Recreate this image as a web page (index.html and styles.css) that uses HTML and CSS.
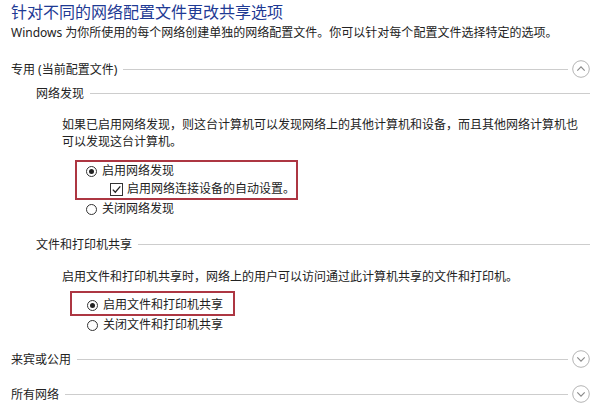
FILE: index.html
```html
<!DOCTYPE html>
<html lang="zh-CN">
<head>
    <meta charset="utf-8">
    <meta name="viewport" content="width=device-width, initial-scale=1.0">
    <title>高级共享设置</title>
    <link rel="stylesheet" href="styles.css">
</head>
<body>
    <div class="page">
        <h1 class="title">针对不同的网络配置文件更改共享选项</h1>
        <p class="desc">Windows 为你所使用的每个网络创建单独的网络配置文件。你可以针对每个配置文件选择特定的选项。</p>

        <div class="group-head first">
            <span>专用 (当前配置文件)</span>
            <span class="rule"></span>
            <svg class="toggle" width="18" height="18" viewBox="0 0 18 18">
                <circle cx="9" cy="9" r="8.3" fill="none" stroke="#b4b4b4" stroke-width="1"/>
                <path d="M5.3 10.6 L9 6.9 L12.7 10.6" fill="none" stroke="#8a8a8a" stroke-width="1.2"/>
            </svg>
        </div>

        <div class="sub-head first-sub">
            <span>网络发现</span>
            <span class="rule"></span>
        </div>
        <p class="note two">如果已启用网络发现，则这台计算机可以发现网络上的其他计算机和设备，而且其他网络计算机也<br>可以发现这台计算机。</p>

        <div class="opts opts-a">
            <div class="marked box-a">
                <div class="option">
                    <span class="radio on"></span>启用网络发现
                </div>
                <div class="option check-row">
                    <svg class="check" width="13" height="13" viewBox="0 0 13 13">
                        <rect x="0.5" y="0.5" width="12" height="12" fill="#fff" stroke="#333" stroke-width="1"/>
                        <path d="M2.8 6.6 L5.3 9.2 L10.3 3.4" fill="none" stroke="#222" stroke-width="1.3"/>
                    </svg>启用网络连接设备的自动设置。
                </div>
            </div>
            <div class="option off-a">
                <span class="radio"></span>关闭网络发现
            </div>
        </div>

        <div class="sub-head second-sub">
            <span>文件和打印机共享</span>
            <span class="rule"></span>
        </div>
        <p class="note one">启用文件和打印机共享时，网络上的用户可以访问通过此计算机共享的文件和打印机。</p>

        <div class="opts opts-b">
            <div class="marked box-b">
                <div class="option">
                    <span class="radio on"></span>启用文件和打印机共享
                </div>
            </div>
            <div class="option off-b">
                <span class="radio"></span>关闭文件和打印机共享
            </div>
        </div>

        <div class="group-head">
            <span>来宾或公用</span>
            <span class="rule"></span>
            <svg class="toggle" width="18" height="18" viewBox="0 0 18 18">
                <circle cx="9" cy="9" r="8.3" fill="none" stroke="#b4b4b4" stroke-width="1"/>
                <path d="M5.3 7.4 L9 11.1 L12.7 7.4" fill="none" stroke="#8a8a8a" stroke-width="1.2"/>
            </svg>
        </div>
        <div class="group-head">
            <span>所有网络</span>
            <span class="rule"></span>
            <svg class="toggle" width="18" height="18" viewBox="0 0 18 18">
                <circle cx="9" cy="9" r="8.3" fill="none" stroke="#b4b4b4" stroke-width="1"/>
                <path d="M5.3 7.4 L9 11.1 L12.7 7.4" fill="none" stroke="#8a8a8a" stroke-width="1.2"/>
            </svg>
        </div>
    </div>
</body>
</html>
```

FILE: styles.css
```css
body {
    margin: 0;
    background-color: #fff;
    font-family: "Noto Sans", "Noto Sans CJK SC", sans-serif;
    font-size: 12px;
    color: #222;
}

.page {
    padding: 0 2px 0 11px;
}

.title {
    margin: 0;
    font-family: "Noto Sans CJK SC", sans-serif;
    font-size: 16px;
    font-weight: normal;
    line-height: 22px;
    color: #1e3a94;
}

.desc {
    margin: 2px 0 0 0;
    line-height: 18px;
}

.group-head, .sub-head {
    display: flex;
    align-items: center;
    height: 20px;
    margin-top: 15px;
}

.group-head.first {
    margin-top: 17px;
}

.rule {
    flex: 1;
    height: 0;
    border-top: 1px solid #cdcdcd;
    margin-left: 6px;
}

.toggle {
    margin-left: 4px;
    flex: none;
}

.sub-head {
    padding-left: 25px;
}

.first-sub {
    margin-top: 4px;
}

.second-sub {
    margin-top: 16px;
}

.note {
    margin: 13px 0 0 51px;
    line-height: 17px;
}

.note.one {
    margin-top: 14px;
}

.opts {
    margin-top: 6px;
}

.opts-a {
    margin-left: 64px;
    margin-top: 10px;
}

.opts-b {
    margin-left: 59px;
    margin-top: 6px;
}

.marked {
    border: 2px solid #ad3642;
}

.box-a {
    width: 210px;
    padding-left: 9px;
    height: 36px;
}

.box-b {
    width: 146px;
    padding: 3px 0 0 15px;
    height: 18px;
}

.option {
    display: flex;
    align-items: center;
    height: 18px;
    line-height: 18px;
    white-space: nowrap;
}

.check-row {
    padding-left: 24px;
}

.check {
    margin-right: 4px;
    flex: none;
}

.off-a {
    padding-left: 11px;
}

.off-b {
    padding-left: 17px;
}

.radio {
    width: 9px;
    height: 9px;
    border: 1px solid #333;
    border-radius: 50%;
    margin-right: 5px;
    position: relative;
    flex: none;
}

.radio.on::after {
    content: "";
    position: absolute;
    left: 2px;
    top: 2px;
    width: 5px;
    height: 5px;
    border-radius: 50%;
    background-color: #222;
}
```
